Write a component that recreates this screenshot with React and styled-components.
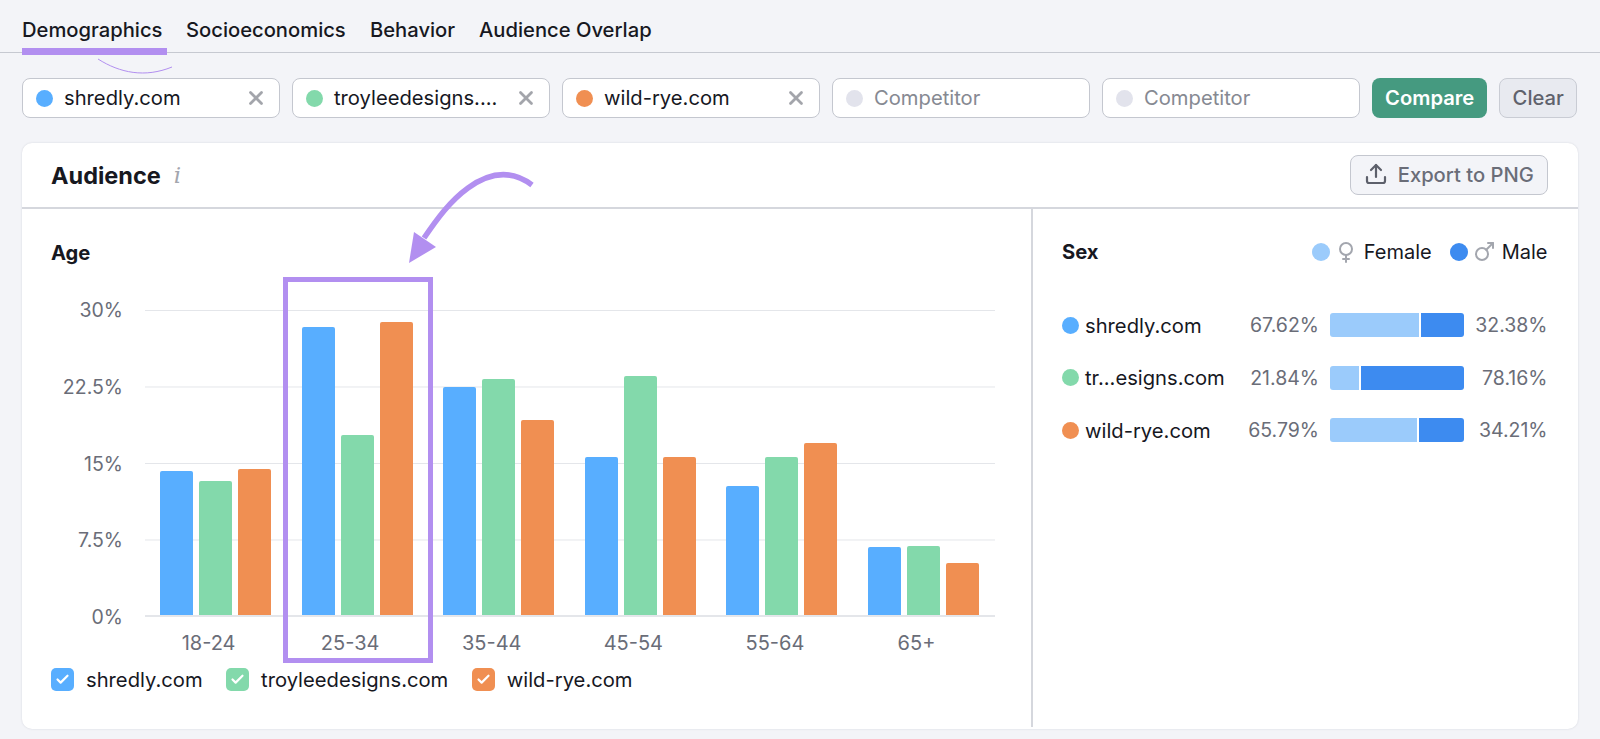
import React from 'react';
import styled, { createGlobalStyle } from 'styled-components';
import { Check, Mars, Upload, Venus, X } from 'lucide-react';

const BLUE = '#58aeff';
const GREEN = '#83d9ab';
const ORANGE = '#f08f52';
const PURPLE = '#b28ff0';
const PX_PER_PERCENT = 10.2;

const GlobalStyle = createGlobalStyle`
  html, body {
    margin: 0;
    background: #f3f4f8;
  }
  body {
    font-family: Inter, "Liberation Sans", sans-serif;
    color: #17181f;
  }
  * {
    box-sizing: border-box;
  }
`;

const Page = styled.div`
  position: relative;
  width: 1600px;
  height: 739px;
  overflow: hidden;
`;

const TabBar = styled.nav`
  display: flex;
  height: 53px;
  padding: 0 22px;
  border-bottom: 1px solid #c6c9d1;
`;

const Tab = styled.div`
  position: relative;
  margin-right: ${({ $active }) => ($active ? '19px' : '24px')};
  width: ${({ $w }) => $w}px;
  padding-top: 18px;
  font-size: 20.2px;
  font-weight: 500;
  line-height: 24px;
  white-space: nowrap;

  &::after {
    content: '';
    display: ${({ $active }) => ($active ? 'block' : 'none')};
    position: absolute;
    left: 0;
    right: 0;
    bottom: -3px;
    height: 7px;
    background: ${PURPLE};
  }
`;

const Toolbar = styled.div`
  display: flex;
  height: 40px;
  margin: 25px 22px 0;
`;

const Inputs = styled.div`
  display: flex;
  gap: 12.5px;
  margin-right: 12.7px;
`;

const Field = styled.div`
  display: flex;
  align-items: center;
  width: 257.5px;
  padding: 0 12px 0 13px;
  border: 1px solid #c4c7cf;
  border-radius: 8px;
  background: #fff;
  font-size: 20.2px;
  color: ${({ $empty }) => ($empty ? '#868992' : '#17181f')};
`;

const Dot = styled.span`
  flex: none;
  width: ${({ $size }) => $size || 17}px;
  height: ${({ $size }) => $size || 17}px;
  border-radius: 50%;
  background: ${({ $color }) => $color};
`;

const FieldText = styled.span`
  flex: 1;
  margin: -2px 0 0 11px;
  white-space: nowrap;
`;

const Button = styled.button`
  height: 40px;
  border-radius: 8px;
  font-family: inherit;
  font-size: 20.2px;
  font-weight: 500;
  padding: 0 0 2px;
`;

const CompareButton = styled(Button)`
  width: 115px;
  margin-right: 12px;
  border: none;
  background: #459a80;
  color: #fff;
  font-weight: 600;
`;

const ClearButton = styled(Button)`
  width: 78px;
  border: 1px solid #c9ccd4;
  background: #e8eaf0;
  color: #5f626c;
`;

const Card = styled.section`
  height: 586px;
  margin: 25px 22.5px 0 22px;
  border-radius: 10px;
  background: #fff;
  box-shadow: 0 0 2px rgba(60, 65, 90, 0.18);
`;

const CardHeader = styled.header`
  display: flex;
  align-items: center;
  justify-content: space-between;
  height: 66px;
  padding: 0 30px 0 29px;
  border-bottom: 2px solid #d5d7dd;
`;

const CardTitle = styled.h2`
  display: flex;
  align-items: center;
  margin: 0;
  font-size: 23.5px;
  font-weight: 700;
`;

const InfoMark = styled.span`
  margin-left: 13px;
  font-family: "DejaVu Serif", serif;
  font-size: 23px;
  font-style: italic;
  font-weight: 400;
  color: #a3a6ae;
`;

const ExportButton = styled(Button)`
  display: flex;
  align-items: center;
  justify-content: center;
  gap: 10px;
  width: 197.5px;
  border: 1px solid #c4c7cf;
  background: #f3f4f8;
  color: #6a6d78;

  svg {
    color: #5d606b;
  }
`;

const CardBody = styled.div`
  display: flex;
  height: 518px;
`;

const AgePanel = styled.div`
  flex: none;
  width: 1011px;
  padding: 32px 0 0 29px;
  border-right: 2px solid #d5d7dd;
`;

const PanelTitle = styled.h3`
  margin: 0;
  font-size: 20.2px;
  font-weight: 700;
  line-height: 24px;
`;

const ChartRow = styled.div`
  display: flex;
  margin-top: 45px;
`;

const YAxis = styled.div`
  display: flex;
  flex-direction: column;
  justify-content: space-between;
  width: 93.5px;
  margin: -12px 0;
  padding-right: 21.5px;
  text-align: right;
`;

const AxisText = styled.span`
  font-size: 19.5px;
  line-height: 24px;
  color: #6a6d78;
`;

const Plot = styled.div`
  display: flex;
  align-items: flex-end;
  gap: 30.6px;
  width: 850.5px;
  height: 307px;
  padding-left: 15.5px;
  border-bottom: 2px solid #e4e6ea;
  background: linear-gradient(#e4e6ea 1px, transparent 1px) 0 0 / 100% 76.5px;
`;

const BarGroup = styled.div`
  display: flex;
  align-items: flex-end;
  gap: 6px;
`;

const Bar = styled.div`
  width: 33px;
  border-radius: 2px 2px 0 0;
  background: ${({ $color }) => $color};
`;

const XAxis = styled.div`
  display: flex;
  margin: 14px 0 0 86.75px;
`;

const XCell = styled(AxisText)`
  width: 141.6px;
  font-size: 20px;
  text-align: center;
`;

const Legend = styled.div`
  display: flex;
  align-items: center;
  margin-top: 12px;
`;

const LegendItem = styled.label`
  display: flex;
  align-items: center;
  margin-right: 23.5px;
  font-size: 20.2px;
`;

const CheckBox = styled.span`
  display: flex;
  align-items: center;
  justify-content: center;
  width: 23px;
  height: 23px;
  margin-right: 12px;
  border-radius: 5px;
  background: ${({ $color }) => $color};
  color: #fff;
`;

const SexPanel = styled.div`
  flex: 1;
  min-width: 0;
  padding: 31px 30px 0 29px;
`;

const SexHead = styled.div`
  display: flex;
  align-items: center;
  justify-content: space-between;
`;

const SexKey = styled.div`
  display: flex;
  align-items: center;
  font-size: 20px;
`;

const KeyIcon = styled.span`
  display: flex;
  margin: 0 6px 0 4px;
  color: #a3a6ae;
`;

const KeySpacer = styled.span`
  width: 18px;
`;

const SexRows = styled.div`
  margin-top: 35px;
`;

const SexRow = styled.div`
  display: flex;
  align-items: center;
  height: 52.5px;
`;

const SexName = styled.span`
  width: 143px;
  margin-left: 6px;
  font-size: 20.2px;
  white-space: nowrap;
`;

const Pct = styled.span`
  width: ${({ $w }) => $w}px;
  font-size: 19.5px;
  color: #6a6d78;
  text-align: right;
`;

const SplitBar = styled.div`
  display: flex;
  gap: 2px;
  width: 134px;
  height: 24px;
  margin: 0 auto 0 11px;
  border-radius: 3px;
  overflow: hidden;
`;

const Segment = styled.div`
  background: ${({ $color }) => $color};
`;

const Highlight = styled.div`
  position: absolute;
  left: 283px;
  top: 277px;
  width: 150px;
  height: 386px;
  border: 5px solid ${PURPLE};
`;

const Annotations = styled.svg`
  position: absolute;
  left: 0;
  top: 0;
  pointer-events: none;
`;

const tabs = [
  { label: 'Demographics', w: 145, active: true },
  { label: 'Socioeconomics', w: 160 },
  { label: 'Behavior', w: 85 },
  { label: 'Audience Overlap', w: 172 },
];

const fields = [
  { label: 'shredly.com', color: BLUE },
  { label: 'troyleedesigns....', color: GREEN },
  { label: 'wild-rye.com', color: ORANGE },
  { label: 'Competitor', color: '#e2e3ec', empty: true },
  { label: 'Competitor', color: '#e2e3ec', empty: true },
];

const ticks = ['30%', '22.5%', '15%', '7.5%', '0%'];

const ages = [
  { label: '18-24', values: [14.1, 13.1, 14.3] },
  { label: '25-34', values: [28.2, 17.6, 28.7] },
  { label: '35-44', values: [22.4, 23.1, 19.1] },
  { label: '45-54', values: [15.5, 23.4, 15.5] },
  { label: '55-64', values: [12.6, 15.5, 16.9] },
  { label: '65+', values: [6.7, 6.8, 5.1] },
];

const barColors = [BLUE, GREEN, ORANGE];

const legend = [
  { label: 'shredly.com', color: BLUE },
  { label: 'troyleedesigns.com', color: GREEN },
  { label: 'wild-rye.com', color: ORANGE },
];

const sexRows = [
  { label: 'shredly.com', color: BLUE, female: 67.62, male: 32.38 },
  { label: 'tr...esigns.com', color: GREEN, female: 21.84, male: 78.16 },
  { label: 'wild-rye.com', color: ORANGE, female: 65.79, male: 34.21 },
];

const App = () => (
  <Page>
    <GlobalStyle />
    <TabBar>
      {tabs.map(tab => (
        <Tab key={tab.label} $active={tab.active} $w={tab.w}>
          {tab.label}
        </Tab>
      ))}
    </TabBar>

    <Toolbar>
      <Inputs>
        {fields.map((field, i) => (
          <Field key={i} $empty={field.empty}>
            <Dot $color={field.color} />
            <FieldText>{field.label}</FieldText>
            {!field.empty && <X size={22} strokeWidth={3} color="#a3a5ab" />}
          </Field>
        ))}
      </Inputs>
      <CompareButton>Compare</CompareButton>
      <ClearButton>Clear</ClearButton>
    </Toolbar>

    <Card>
      <CardHeader>
        <CardTitle>
          Audience<InfoMark>i</InfoMark>
        </CardTitle>
        <ExportButton>
          <Upload size={24} strokeWidth={2.2} />
          Export to PNG
        </ExportButton>
      </CardHeader>

      <CardBody>
        <AgePanel>
          <PanelTitle>Age</PanelTitle>
          <ChartRow>
            <YAxis>
              {ticks.map(tick => (
                <AxisText key={tick}>{tick}</AxisText>
              ))}
            </YAxis>
            <Plot>
              {ages.map(age => (
                <BarGroup key={age.label}>
                  {age.values.map((value, i) => (
                    <Bar
                      key={i}
                      $color={barColors[i]}
                      style={{ height: value * PX_PER_PERCENT }}
                    />
                  ))}
                </BarGroup>
              ))}
            </Plot>
          </ChartRow>
          <XAxis>
            {ages.map(age => (
              <XCell key={age.label}>{age.label}</XCell>
            ))}
          </XAxis>
          <Legend>
            {legend.map(item => (
              <LegendItem key={item.label}>
                <CheckBox $color={item.color}>
                  <Check size={15} strokeWidth={3.5} />
                </CheckBox>
                {item.label}
              </LegendItem>
            ))}
          </Legend>
        </AgePanel>

        <SexPanel>
          <SexHead>
            <PanelTitle>Sex</PanelTitle>
            <SexKey>
              <Dot $color="#9bcbfb" $size={18} />
              <KeyIcon>
                <Venus size={24} strokeWidth={2} />
              </KeyIcon>
              Female
              <KeySpacer />
              <Dot $color="#3d8bf0" $size={18} />
              <KeyIcon>
                <Mars size={24} strokeWidth={2} />
              </KeyIcon>
              Male
            </SexKey>
          </SexHead>
          <SexRows>
            {sexRows.map(row => (
              <SexRow key={row.label}>
                <Dot $color={row.color} />
                <SexName>{row.label}</SexName>
                <Pct $w={91}>{row.female}%</Pct>
                <SplitBar>
                  <Segment $color="#9bcbfb" style={{ flex: row.female }} />
                  <Segment $color="#3d8bf0" style={{ flex: row.male }} />
                </SplitBar>
                <Pct $w={83}>{row.male}%</Pct>
              </SexRow>
            ))}
          </SexRows>
        </SexPanel>
      </CardBody>
    </Card>

    <Highlight />
    <Annotations width="1600" height="739" viewBox="0 0 1600 739" fill="none">
      <path d="M532 185C512 170 490 172 468 188C450 201 437 219 424 238" stroke={PURPLE} strokeWidth="5.5" />
      <path d="M414 232L436 247L409 263Z" fill={PURPLE} />
      <path d="M98 59C120 73 145 78 172 67" stroke={PURPLE} strokeWidth="1" />
    </Annotations>
  </Page>
);

export default App;
